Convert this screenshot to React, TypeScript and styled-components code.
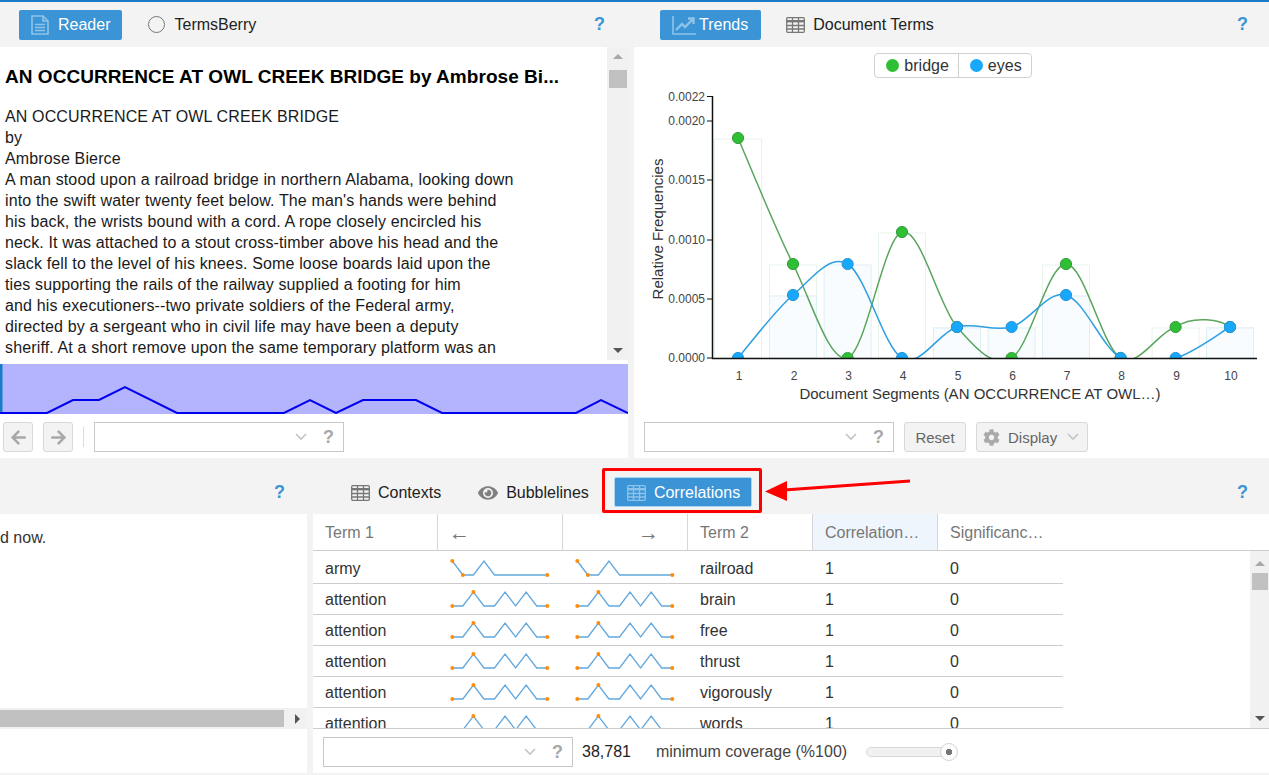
import styled, { createGlobalStyle } from "styled-components";
import type { ReactNode } from "react";
import { FaArrowLeft, FaArrowRight, FaCog, FaEye } from "react-icons/fa";

const GlobalStyle = createGlobalStyle`
  html, body {
    margin: 0;
    padding: 0;
    background: #f3f3f3;
    overflow: hidden;
  }
  * {
    box-sizing: border-box;
  }
`;

const READER_LINES = [
  "AN OCCURRENCE AT OWL CREEK BRIDGE",
  "by",
  "Ambrose Bierce",
  "A man stood upon a railroad bridge in northern Alabama, looking down",
  "into the swift water twenty feet below. The man's hands were behind",
  "his back, the wrists bound with a cord. A rope closely encircled his",
  "neck. It was attached to a stout cross-timber above his head and the",
  "slack fell to the level of his knees. Some loose boards laid upon the",
  "ties supporting the rails of the railway supplied a footing for him",
  "and his executioners--two private soldiers of the Federal army,",
  "directed by a sergeant who in civil life may have been a deputy",
  "sheriff. At a short remove upon the same temporary platform was an",
];

const STRIP_POINTS =
  "0,413 47,413 73,400 99,400 125,387 177,413 284,413 310,400 336,413 363,400 416,400 442,413 576,413 601,400 628,413";

const BRIDGE = [138, 264, 358, 232, 327, 358, 264, 358, 327, 327];
const EYES = [358, 295, 264, 358, 327, 327, 295, 358, 358, 327];
const SEGMENT_X = [738, 793, 847.6, 902, 957, 1011.6, 1066, 1120.6, 1175.6, 1230];
const Y_TICKS = [
  { label: "0.0022", y: 96.5 },
  { label: "0.0020", y: 121 },
  { label: "0.0015", y: 180 },
  { label: "0.0010", y: 240 },
  { label: "0.0005", y: 299 },
  { label: "0.0000", y: 358 },
];

// bulge lifts the control points of one segment, the last green arc rises more than the spline gives
const splinePath = (values: number[], bulge: Record<number, number> = {}) => {
  let d = `M${SEGMENT_X[0]},${values[0]}`;
  for (let i = 0; i < values.length - 1; i++) {
    const lift = bulge[i] ?? 0;
    const x0 = SEGMENT_X[Math.max(i - 1, 0)];
    const y0 = values[Math.max(i - 1, 0)];
    const x3 = SEGMENT_X[Math.min(i + 2, values.length - 1)];
    const y3 = values[Math.min(i + 2, values.length - 1)];
    const c1x = SEGMENT_X[i] + (SEGMENT_X[i + 1] - x0) / 6;
    const c1y = values[i] + (values[i + 1] - y0) / 6 - lift;
    const c2x = SEGMENT_X[i + 1] - (x3 - SEGMENT_X[i]) / 6;
    const c2y = values[i + 1] - (y3 - values[i]) / 6 - lift;
    d += ` C${c1x},${c1y} ${c2x},${c2y} ${SEGMENT_X[i + 1]},${values[i + 1]}`;
  }
  return d;
};

const HIGH = 8;
const LOW = 22;
const RIDGES = [LOW, LOW, HIGH, LOW, LOW, HIGH, LOW, HIGH, LOW, LOW];
const SINGLE = [HIGH, LOW, LOW, HIGH, LOW, LOW, LOW, LOW, LOW, LOW];

const ROWS = [
  { left: "army", right: "railroad", spark: SINGLE, dots: [0, 1, 9] },
  { left: "attention", right: "brain", spark: RIDGES, dots: [0, 2, 9] },
  { left: "attention", right: "free", spark: RIDGES, dots: [0, 2, 9] },
  { left: "attention", right: "thrust", spark: RIDGES, dots: [0, 2, 9] },
  { left: "attention", right: "vigorously", spark: RIDGES, dots: [0, 2, 9] },
  { left: "attention", right: "words", spark: RIDGES, dots: [0, 2, 9] },
];

const DocIcon = () => (
  <svg width="18" height="20" viewBox="0 0 18 20" fill="none" stroke="#8fc3ea" strokeWidth="1.6">
    <path d="M1 1h11l5 5v13H1z" />
    <path d="M12 1v5h5M4 9.5h10M4 12.5h10M4 15.5h10" />
  </svg>
);

const TrendIcon = () => (
  <svg width="24" height="20" viewBox="0 0 24 20" fill="none" stroke="#8fc3ea">
    <path d="M1 1v18h23" strokeWidth="1.6" />
    <path d="M4 15l6-6 3 3 8-8M16 3.5h5.5V9" strokeWidth="2.4" />
  </svg>
);

const TableIcon = ({ color }: { color: string }) => (
  <svg width="19" height="16" viewBox="0 0 19 16" fill="none" stroke={color} strokeWidth="1.3">
    <rect x="0.7" y="0.7" width="17.6" height="14.6" rx="1" />
    <path d="M0.7 4.2h17.6" strokeWidth="2.4" />
    <path d="M0.7 8.5h17.6M0.7 12h17.6M6.5 1v14M12.5 1v14" />
  </svg>
);

const Spark = ({ values, dots }: { values: number[]; dots: number[] }) => {
  const xAt = (i: number) => 2.3 + i * 10.55;
  return (
    <SparkSvg width="100" height="30" viewBox="0 0 100 30">
      <polyline
        points={values.map((v, i) => `${xAt(i)},${v}`).join(" ")}
        fill="none"
        stroke="#62a8de"
        strokeWidth="1.3"
      />
      {dots.map((i) => (
        <circle key={i} cx={xAt(i)} cy={values[i]} r="2" fill="#ff8c0a" />
      ))}
    </SparkSvg>
  );
};

const ComboBox = () => (
  <Combo>
    <ComboChevron viewBox="0 0 12 8" fill="none" stroke="#c4c4c4" strokeWidth="1.6">
      <path d="M1 1l5 5 5-5" />
    </ComboChevron>
    <ComboHelp>?</ComboHelp>
  </Combo>
);

const TrendChart = () => (
  <ChartSvg width="635" height="336" viewBox="634 78 635 336">
    <defs>
      <clipPath id="plot">
        <rect x="713" y="90" width="545" height="268" />
      </clipPath>
    </defs>
    {BRIDGE.map((y, i) =>
      y < 358 ? (
        <rect key={i} x={SEGMENT_X[i] - 23.5} y={y + 1} width="47" height={357 - y} fill="#fff" stroke="#e8f4ea" />
      ) : null,
    )}
    {EYES.map((y, i) =>
      y < 358 ? (
        <rect key={i} x={SEGMENT_X[i] - 23.5} y={y + 1} width="47" height={357 - y} fill="#f8fcfe" stroke="#dcf0f6" />
      ) : null,
    )}
    <g clipPath="url(#plot)">
      <g fill="none" strokeWidth="1.5">
        <path d={splinePath(BRIDGE, { 8: 7 })} stroke="#5aa55d" />
        <path d={splinePath(EYES)} stroke="#2d9fe0" />
      </g>
      {BRIDGE.map((y, i) => (
        <circle key={i} cx={SEGMENT_X[i]} cy={y} r="5.6" fill="#2fbf35" stroke="#3a9a40" />
      ))}
      {EYES.map((y, i) => (
        <circle key={i} cx={SEGMENT_X[i]} cy={y} r="5.6" fill="#17a8fb" stroke="#2a94d8" />
      ))}
    </g>
    <path d="M712.5 96v262.5H1257" fill="none" stroke="#111" strokeWidth="1.5" />
    {Y_TICKS.map((t) => (
      <g key={t.label}>
        <path d={`M707 ${t.y}h6`} stroke="#111" />
        <ChartTick x="705" y={t.y + 4} textAnchor="end">
          {t.label}
        </ChartTick>
      </g>
    ))}
    {SEGMENT_X.map((x, i) => (
      <ChartTick key={x} x={x + 1} y="380" textAnchor="middle">
        {i + 1}
      </ChartTick>
    ))}
    <ChartLabel x="980" y="399" textAnchor="middle">
      Document Segments (AN OCCURRENCE AT OWL…)
    </ChartLabel>
    <ChartLabel transform="translate(663 229) rotate(-90)" textAnchor="middle">
      Relative Frequencies
    </ChartLabel>
  </ChartSvg>
);

type TabProps = {
  icon: ReactNode;
  label: string;
  active?: boolean;
  framed?: boolean;
  tight?: boolean;
  low?: boolean;
};

const Tab = ({ icon, label, active, framed, tight, low }: TabProps) => (
  <TabItem $active={active} $framed={framed} $tight={tight} $low={low}>
    {icon}
    {label}
  </TabItem>
);

export default function App() {
  return (
    <Page>
      <GlobalStyle />
      <TopRow>
        <Panel>
          <PanelHeader $start={19} $gap={14}>
            <Tab active icon={<DocIcon />} label="Reader" />
            <Tab icon={<RadioRing />} label="TermsBerry" />
            <HelpMark $right={23}>?</HelpMark>
          </PanelHeader>
          <ReaderBody>
            <ReaderText>
              <ReaderTitle>AN OCCURRENCE AT OWL CREEK BRIDGE by Ambrose Bi...</ReaderTitle>
              {READER_LINES.map((line) => (
                <ReaderLine key={line}>{line}</ReaderLine>
              ))}
            </ReaderText>
            <VScroll $width={21} $padTop={7}>
              <ScrollArrow $up />
              <ScrollThumb $top={23} $height={18} />
              <ScrollArrow />
            </VScroll>
          </ReaderBody>
          <Strip>
            <svg width="628" height="50" viewBox="0 364 628 50">
              <rect x="0" y="364" width="2.5" height="50" fill="#1a7cc4" />
              <polyline points={STRIP_POINTS} fill="none" stroke="#0000ee" strokeWidth="2" />
            </svg>
          </Strip>
          <PanelFooter $start={3}>
            <NavButton>
              <FaArrowLeft size={17} />
            </NavButton>
            <NavButton>
              <FaArrowRight size={17} />
            </NavButton>
            <FooterDivider />
            <ComboBox />
          </PanelFooter>
        </Panel>

        <Panel>
          <PanelHeader $start={26} $gap={13}>
            <Tab active tight icon={<TrendIcon />} label="Trends" />
            <Tab tight icon={<TableIcon color="#777" />} label="Document Terms" />
            <HelpMark $right={21}>?</HelpMark>
          </PanelHeader>
          <ChartBody>
            <Legend>
              <LegendItem>
                <LegendDot $color="#2fbf35" />
                bridge
              </LegendItem>
              <LegendItem>
                <LegendDot $color="#17a8fb" />
                eyes
              </LegendItem>
            </Legend>
            <TrendChart />
          </ChartBody>
          <PanelFooter $start={10}>
            <ComboBox />
            <ToolButton>Reset</ToolButton>
            <ToolButton>
              <FaCog size={17} color="#aaa" />
              Display
              <ToolChevron viewBox="0 0 12 8" fill="none" stroke="#c4c4c4" strokeWidth="1.6">
                <path d="M1 1l5 5 5-5" />
              </ToolChevron>
            </ToolButton>
          </PanelFooter>
        </Panel>
      </TopRow>

      <BottomRow>
        <Panel>
          <PanelHeader $start={0} $gap={13} $tall>
            <HelpMark $right={22}>?</HelpMark>
          </PanelHeader>
          <ContextBody>d now.</ContextBody>
          <HScroll>
            <HThumb />
            <HArrow />
          </HScroll>
          <ContextFooter />
        </Panel>

        <Panel>
          <PanelHeader $start={26} $gap={13} $tall>
            <Tab tight low icon={<TableIcon color="#777" />} label="Contexts" />
            <Tab tight low icon={<FaEye size={20} color="#808080" />} label="Bubblelines" />
            <Highlighted>
              <Tab active framed tight low icon={<TableIcon color="#8fc3ea" />} label="Correlations" />
            </Highlighted>
            <HelpMark $right={21}>?</HelpMark>
            <Pointer width="150" height="24" viewBox="0 0 150 24">
              <path d="M146 3L20 12" stroke="#f00" strokeWidth="3" fill="none" />
              <path d="M1 13.5L23 3l0 20z" fill="#f00" />
            </Pointer>
          </PanelHeader>
          <GridHead>
            <HeadCell>Term 1</HeadCell>
            <HeadCell $arrow>←</HeadCell>
            <HeadCell $arrow $alignEnd>
              →
            </HeadCell>
            <HeadCell>Term 2</HeadCell>
            <HeadCell $sorted>Correlation…</HeadCell>
            <HeadCell $last>Significanc…</HeadCell>
          </GridHead>
          <GridBody>
            <GridRows>
              {ROWS.map((row) => (
                <GridRow key={row.right}>
                  <Cell>{row.left}</Cell>
                  <Cell>
                    <Spark values={row.spark} dots={row.dots} />
                  </Cell>
                  <Cell>
                    <Spark values={row.spark} dots={row.dots} />
                  </Cell>
                  <Cell>{row.right}</Cell>
                  <Cell>1</Cell>
                  <Cell>0</Cell>
                </GridRow>
              ))}
            </GridRows>
            <VScroll $width={19} $padTop={10}>
              <ScrollArrow $up />
              <ScrollThumb $top={22} $height={17} />
              <ScrollArrow />
            </VScroll>
          </GridBody>
          <GridFooter>
            <ComboBox />
            <Count>38,781</Count>
            <Coverage>minimum coverage (%100)</Coverage>
            <SliderTrack>
              <SliderThumb />
            </SliderTrack>
          </GridFooter>
        </Panel>
      </BottomRow>
    </Page>
  );
}

const Page = styled.div`
  width: 1269px;
  height: 775px;
  overflow: hidden;
  background: #f3f3f3;
  border-top: 2px solid #1a7cc4;
  font-family: "Liberation Sans", Arial, sans-serif;
  font-size: 16px;
  color: #222;
`;

const TopRow = styled.div`
  display: grid;
  grid-template-columns: 628px 635px;
  column-gap: 6px;
  height: 457px;
`;

const BottomRow = styled.div`
  display: grid;
  grid-template-columns: 307px 956px;
  column-gap: 6px;
  height: 314px;
`;

const Panel = styled.section`
  display: flex;
  flex-direction: column;
  min-width: 0;
  position: relative;
`;

const PanelHeader = styled.header<{ $start: number; $gap: number; $tall?: boolean }>`
  display: flex;
  align-items: center;
  flex: none;
  gap: ${(props) => props.$gap}px;
  height: ${(props) => (props.$tall ? 55 : 45)}px;
  padding-left: ${(props) => props.$start}px;
  padding-top: ${(props) => (props.$tall ? 11 : 0)}px;
  background: #f3f3f3;
  position: relative;
`;

const TabItem = styled.div<{ $active?: boolean; $framed?: boolean; $tight?: boolean; $low?: boolean }>`
  display: flex;
  align-items: center;
  gap: ${(props) => (props.$tight ? (props.$active && !props.$framed ? 3 : 8) : 9)}px;
  height: 30px;
  padding: ${(props) => (props.$low ? 1 : 0)}px ${(props) => (props.$framed ? 11 : props.$active && props.$tight ? 13 : 12)}px 0 12px;
  border-radius: 2px;
  color: ${(props) => (props.$active ? "#fff" : "#222")};
  background: ${(props) => (props.$active ? "#3a94d6" : "transparent")};
  border: ${(props) => (props.$framed ? "1px solid #a9d4f2" : "0")};
`;

const RadioRing = styled.span`
  width: 17px;
  height: 17px;
  border: 1.5px solid #777;
  border-radius: 50%;
`;

const HelpMark = styled.span<{ $right: number }>`
  margin-left: auto;
  margin-right: ${(props) => props.$right}px;
  font-size: 18px;
  font-weight: 700;
  color: #3a94d6;
`;

const ReaderBody = styled.div`
  display: flex;
  height: 313px;
  flex: none;
  background: #fff;
  overflow: hidden;
`;

const ReaderText = styled.div`
  flex: 1;
  min-width: 0;
  padding: 18px 0 0 5px;
  overflow: hidden;
  color: #1a1a1a;
`;

const ReaderTitle = styled.h1`
  margin: 0 0 17px;
  font-size: 19px;
  line-height: 24px;
  font-weight: 700;
  letter-spacing: 0.04px;
  color: #000;
  white-space: nowrap;
`;

const ReaderLine = styled.div`
  height: 21px;
  line-height: 21px;
  letter-spacing: 0.14px;
  white-space: nowrap;
`;

const VScroll = styled.div<{ $width: number; $padTop: number }>`
  flex: none;
  display: flex;
  flex-direction: column;
  justify-content: space-between;
  position: relative;
  width: ${(props) => props.$width}px;
  padding: ${(props) => props.$padTop}px 0 7px;
  background: #f1f1f1;
`;

const ScrollArrow = styled.span<{ $up?: boolean }>`
  align-self: center;
  width: 0;
  height: 0;
  border-left: 5px solid transparent;
  border-right: 5px solid transparent;
  ${(props) => (props.$up ? "border-bottom: 5px solid #a8a8a8;" : "border-top: 5px solid #555;")}
`;

const ScrollThumb = styled.span<{ $top: number; $height: number }>`
  position: absolute;
  left: 2px;
  right: 1px;
  top: ${(props) => props.$top}px;
  height: ${(props) => props.$height}px;
  background: #c1c1c1;
`;

const Strip = styled.div`
  flex: none;
  height: 54px;
  padding-top: 4px;
  background: #fff;
  line-height: 0;

  svg {
    background: #b3b3fe;
  }
`;

const PanelFooter = styled.footer<{ $start: number }>`
  display: flex;
  align-items: center;
  flex: none;
  gap: 10px;
  height: 44px;
  padding: 2px 0 0 ${(props) => props.$start}px;
  background: #fff;
`;

const NavButton = styled.button`
  display: grid;
  place-items: center;
  width: 30px;
  height: 30px;
  padding: 0;
  border: 1px solid #d8d8d8;
  border-radius: 3px;
  background: #f3f3f3;
  color: #a8a8a8;
`;

const FooterDivider = styled.span`
  width: 1px;
  height: 20px;
  background: #dcdcdc;
`;

const Combo = styled.div`
  display: flex;
  align-items: center;
  justify-content: flex-end;
  gap: 16px;
  flex: none;
  width: 250px;
  height: 30px;
  padding-right: 9px;
  background: #fff;
  border: 1px solid #c8c8c8;
`;

const ComboChevron = styled.svg`
  width: 12px;
  height: 8px;
`;

const ComboHelp = styled.span`
  font-size: 18px;
  font-weight: 700;
  color: #a8a8a8;
`;

const ChartBody = styled.div`
  display: flex;
  flex-direction: column;
  align-items: center;
  flex: none;
  height: 367px;
  padding-top: 6px;
  background: #fff;
`;

const Legend = styled.div`
  display: flex;
  flex: none;
  height: 25px;
  margin-left: 3px;
  border: 1px solid #d0d0d0;
  border-radius: 4px;
`;

const LegendItem = styled.div`
  display: flex;
  align-items: center;
  gap: 5px;
  padding: 0 9px 0 11px;
  color: #333;

  & + & {
    border-left: 1px solid #d0d0d0;
  }
`;

const LegendDot = styled.span<{ $color: string }>`
  width: 13px;
  height: 13px;
  border-radius: 50%;
  background: ${(props) => props.$color};
`;

const ChartSvg = styled.svg`
  display: block;
  flex: none;
`;

const ChartTick = styled.text`
  font-size: 12px;
  fill: #444;
`;

const ChartLabel = styled.text`
  font-size: 15px;
  fill: #333;
`;

const ToolButton = styled.button`
  display: flex;
  align-items: center;
  justify-content: center;
  gap: 8px;
  height: 30px;
  min-width: 62px;
  padding: 0 6px;
  font: inherit;
  font-size: 15px;
  color: #666;
  background: #f3f3f3;
  border: 1px solid #d8d8d8;
  border-radius: 3px;
`;

const ToolChevron = styled.svg`
  width: 12px;
  height: 8px;
  margin: 0 2px 0 2px;
`;

const ContextBody = styled.div`
  flex: none;
  height: 194px;
  padding-top: 15px;
  background: #fff;
  color: #333;
`;

const HScroll = styled.div`
  display: flex;
  align-items: center;
  flex: none;
  height: 21px;
  padding-right: 7px;
  background: #f1f1f1;
`;

const HThumb = styled.span`
  width: 284px;
  height: 17px;
  background: #c1c1c1;
`;

const HArrow = styled.span`
  margin-left: auto;
  width: 0;
  height: 0;
  border-top: 5px solid transparent;
  border-bottom: 5px solid transparent;
  border-left: 5px solid #555;
`;

const ContextFooter = styled.div`
  flex: none;
  height: 44px;
  background: #fff;
`;

const Highlighted = styled.div`
  margin: 0 0 3px -12px;
  padding: 9px 10px 6px 12px;
  outline: 3.5px solid #f00;
  outline-offset: -3.5px;
  border-radius: 2px;
`;

const Pointer = styled.svg`
  position: absolute;
  left: 451px;
  top: 19px;
`;

const GridHead = styled.div`
  display: grid;
  grid-template-columns: repeat(6, 125px);
  flex: none;
  height: 37px;
  background: #fff;
  border-bottom: 1px solid #ccc;
`;

const HeadCell = styled.div<{ $arrow?: boolean; $alignEnd?: boolean; $sorted?: boolean; $last?: boolean }>`
  display: flex;
  align-items: center;
  justify-content: ${(props) => (props.$alignEnd ? "flex-end" : "flex-start")};
  padding: 2px ${(props) => (props.$alignEnd ? 28 : 0)}px 0 ${(props) => (props.$arrow ? 11 : 12)}px;
  color: #777;
  white-space: nowrap;
  font-size: ${(props) => (props.$arrow ? 21 : 16)}px;
  background: ${(props) => (props.$sorted ? "#eef5fc" : "#fff")};
  border-right: ${(props) => (props.$last ? "0" : "1px solid #d6d6d6")};
`;

const GridBody = styled.div`
  display: flex;
  justify-content: space-between;
  flex: none;
  height: 177px;
  background: #fff;
  overflow: hidden;
`;

const GridRows = styled.div`
  width: 750px;
  padding-top: 2px;
`;

const GridRow = styled.div`
  display: grid;
  grid-template-columns: repeat(6, 125px);
  height: 31px;
  border-bottom: 1px solid #ccc;
`;

const Cell = styled.div`
  padding-left: 12px;
  line-height: 32px;
  color: #333;
`;

const SparkSvg = styled.svg`
  display: block;
`;

const GridFooter = styled.footer`
  display: flex;
  align-items: center;
  flex: none;
  height: 45px;
  padding: 2px 0 0 10px;
  background: #fff;
  border-top: 1px solid #ccc;
`;

const Count = styled.span`
  margin-left: 9px;
  color: #222;
`;

const Coverage = styled.span`
  margin-left: 25px;
  color: #444;
`;

const SliderTrack = styled.div`
  position: relative;
  width: 92px;
  height: 10px;
  margin-left: 19px;
  background: #f1f1f1;
  border: 1px solid #d8d8d8;
  border-radius: 5px;
`;

const SliderThumb = styled.span`
  position: absolute;
  right: -1px;
  top: -5px;
  width: 18px;
  height: 18px;
  border-radius: 50%;
  background: radial-gradient(circle, #777 0 3px, #fdfdfd 3.5px);
  border: 1px solid #d4d4d4;
`;
